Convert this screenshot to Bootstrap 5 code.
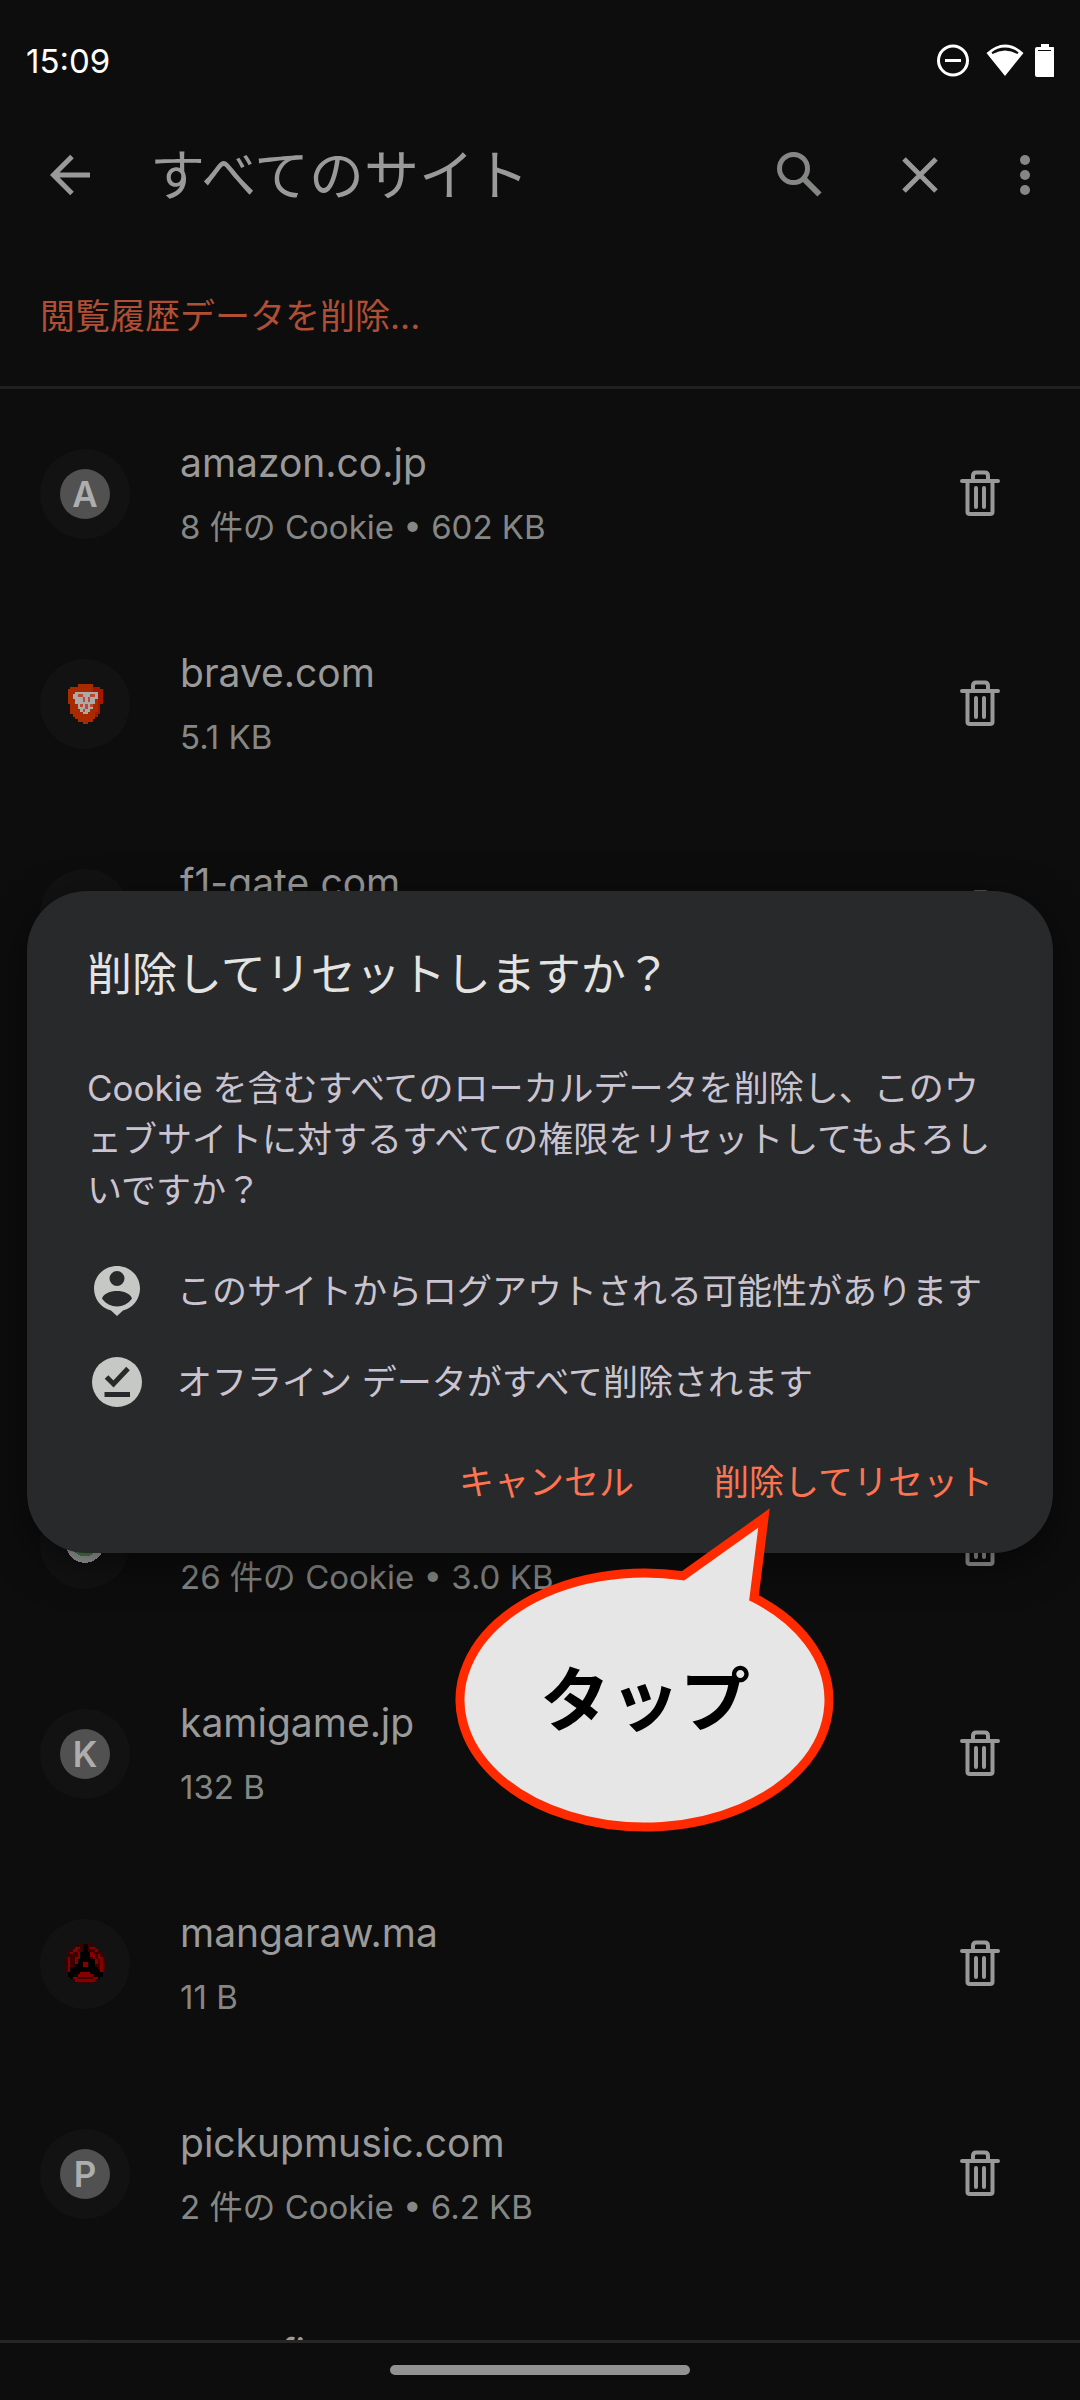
<!DOCTYPE html>
<html lang="ja">
<head>
<meta charset="utf-8">
<meta name="viewport" content="width=device-width, initial-scale=1">
<title>すべてのサイト</title>
<link href="https://cdn.jsdelivr.net/npm/bootstrap@5.3.0/dist/css/bootstrap.min.css" rel="stylesheet">
<style>
  body { background: #0d0d0d; color: #9a9a9a; font-family: Inter, "Noto Sans CJK JP", sans-serif; font-size: 35px; line-height: 50px; }
  svg { display: block; flex: none; }
  .btn { --bs-btn-padding-x: 0; --bs-btn-padding-y: 0; --bs-btn-border-width: 0; --bs-btn-font-size: 35px; --bs-btn-line-height: 50px; color: inherit; }
  .status-bar { height: 104px; padding: 18px 26px 0; color: #fff; font-size: 33px; }
  .app-bar { height: 142px; padding: 0 50px 0 46px; }
  .app-title { font-size: 55px; line-height: 80px; padding-left: 56px; }
  .app-tools { gap: 76px; }
  .clear-row { height: 143px; padding: 0 40px; border-bottom: 3px solid #202021; }
  .clear-link { color: #b04f36; }
  .site-row { height: 210px; padding: 0 76px 0 40px; gap: 50px; }
  .avatar { width: 90px; height: 90px; background: #121212; }
  .letter-disc { width: 50px; height: 50px; background: #515151; color: #aeaeae; font-weight: 600; font-size: 35px; line-height: 50px; }
  .site-label { padding-top: 6px; }
  .site-name { font-size: 39px; line-height: 60px; min-height: 60px; }
  .site-info { color: #858785; font-size: 33px; line-height: 68px; min-height: 68px; }
  .nav-area { height: 60px; padding-bottom: 3px; border-top: 3px solid #262626; }
  .home-pill { width: 300px; height: 10px; background: #929292; }
  .dialog-box { margin: 0 27px; padding: 52px 60px 46px; background: #28292b; border-radius: 60px; color: #cac4d0; box-shadow: 0 12px 40px rgba(0, 0, 0, .5); }
  .dialog-title { font-size: 45px; line-height: 64px; margin: 0 0 56px; color: #e3e3e1; }
  .dialog-text { margin: 0 -10px 50px 0; line-height: 51px; }
  .dialog-notes { gap: 41px; margin-bottom: 50px; }
  .dialog-notes li { gap: 35px; padding-left: 5px; margin-right: -20px; }
  .dialog-actions { gap: 80px; color: #ff7450; }
  .tap-bubble { left: 455px; top: 1500px; width: 380px; }
  .tap-label { left: 0; right: 0; top: 151px; font-size: 70px; line-height: 100px; font-weight: 700; color: #000; }
</style>
</head>
<body>
<svg width="0" height="0" class="position-absolute" aria-hidden="true">
  <symbol id="trash" viewBox="0 0 48 48"><g fill="none" stroke="#999" stroke-width="4" stroke-linecap="round" stroke-linejoin="round"><path d="M6 11H42M11.500 12V42Q11.500 44 14 44H34Q36.500 44 36.500 42V12M17 11V6Q17 2.500 20 2.500H29Q32 2.500 32 6V11M20 18V37M28 18V37"/></g></symbol>
</svg>
<div class="position-relative d-flex flex-column vh-100 overflow-hidden">
  <div class="status-bar d-flex align-items-center justify-content-between flex-shrink-0">
    <span>15:09</span>
    <svg width="118" height="36" viewBox="0 0 118 36" fill="#fff" aria-hidden="true">
      <circle cx="17" cy="17.500" r="14.500" fill="none" stroke="#fff" stroke-width="3"/><path d="M9 16h16v3H9z"/>
      <path d="M69 33 50.500 10Q69-7 87.500 10ZM69 4.500Q61 4.500 55.500 9.500L56.500 11Q69 4 81.500 11L82.500 9.500Q77 4.500 69 4.500Z" fill-rule="evenodd"/>
      <path d="M105 1h8v3h4a2 2 0 0 1 2 2v26a2 2 0 0 1-2 2h-16a2 2 0 0 1-2-2V6a2 2 0 0 1 2-2h4zM102 7v1h13V7z" fill-rule="evenodd"/>
    </svg>
  </div>
  <header class="app-bar d-flex align-items-center flex-shrink-0">
    <button class="btn" aria-label="戻る"><svg width="48" height="48" viewBox="0 0 48 48" fill="none" stroke="#999" stroke-width="5"><path d="M44 24H8M26 5.500 7.500 24 26 42.500"/></svg></button>
    <h1 class="app-title fw-normal mb-0 me-auto">すべてのサイト</h1>
    <div class="app-tools d-flex align-items-center">
      <button class="btn" aria-label="検索"><svg width="48" height="48" viewBox="-3 0 48 48" overflow="visible" fill="none" stroke="#858785" stroke-width="5"><circle cx="18.500" cy="17.500" r="14"/><path stroke-width="6" d="M29 28 44.500 43.500"/></svg></button>
      <button class="btn" aria-label="閉じる"><svg width="48" height="48" viewBox="0 0 48 48" fill="none" stroke="#999" stroke-width="5"><path d="M8 8 40 40M40 8 8 40"/></svg></button>
      <button class="btn" aria-label="その他"><svg width="10" height="48" viewBox="0 0 10 48" fill="#858785"><circle cx="5" cy="9" r="5"/><circle cx="5" cy="24" r="5"/><circle cx="5" cy="39" r="5"/></svg></button>
    </div>
  </header>
  <div class="clear-row d-flex align-items-center flex-shrink-0"><a class="clear-link text-decoration-none" href="#">閲覧履歴データを削除...</a></div>
  <main class="flex-grow-1 overflow-hidden">
    <ul class="list-unstyled mb-0">
      <li class="site-row d-flex align-items-center">
        <div class="avatar rounded-circle d-flex align-items-center justify-content-center"><span class="letter-disc rounded-circle text-center">A</span></div>
        <div class="site-label flex-grow-1"><div class="site-name">amazon.co.jp</div><div class="site-info">8 件の Cookie • 602 KB</div></div>
        <button class="btn" aria-label="削除"><svg width="48" height="48"><use href="#trash"/></svg></button>
      </li>
      <li class="site-row d-flex align-items-center">
        <div class="avatar rounded-circle d-flex align-items-center justify-content-center">
          <svg width="40" height="40" viewBox="0 0 16 16" shape-rendering="crispEdges" aria-hidden="true">
            <path fill="#a82b00" d="M5 0h6v1h3v1h1v6h-1v4h-1v1h-1v1h-1v1H9v1H7v-1H5v-1H4v-1H3v-1H2V8H1V2h1V1h3z"/>
            <path fill="#a81500" d="M11 1h3v1h1v6h-1v4h-1v1h-1v-2h1V5h-2z"/>
            <path fill="#aaa" d="M4 3h9v3h-1v2h-1v2h-1v1H9v1H7v-1H6v-1H5V8H4V6H3V4h1z"/>
            <path fill="#bd4a30" d="M5 4h2v1H5zM10 4h2v1h-2zM7 5h1v2H7zM9 5h1v2H9zM6 8h1v1H6zM10 8h1v1h-1zM8 8h1v2H8zM7 10h1v1H7z"/>
          </svg></div>
        <div class="site-label flex-grow-1"><div class="site-name">brave.com</div><div class="site-info">5.1 KB</div></div>
        <button class="btn" aria-label="削除"><svg width="48" height="48"><use href="#trash"/></svg></button>
      </li>
      <li class="site-row d-flex align-items-center">
        <div class="avatar rounded-circle"></div>
        <div class="site-label flex-grow-1"><div class="site-name">f1-gate.com</div><div class="site-info"></div></div>
        <button class="btn" aria-label="削除"><svg width="48" height="48"><use href="#trash"/></svg></button>
      </li>
      <li class="site-row"></li>
      <li class="site-row"></li>
      <li class="site-row d-flex align-items-center">
        <div class="avatar rounded-circle d-flex align-items-center justify-content-center">
          <svg width="40" height="40" viewBox="0 0 16 16" shape-rendering="crispEdges" aria-hidden="true"><circle cx="8" cy="8" r="7.500" fill="#a5a5a5"/><circle cx="8" cy="7.500" r="5.500" fill="#4c8a50"/></svg></div>
        <div class="site-label flex-grow-1"><div class="site-name"></div><div class="site-info">26 件の Cookie • 3.0 KB</div></div>
        <button class="btn" aria-label="削除"><svg width="48" height="48"><use href="#trash"/></svg></button>
      </li>
      <li class="site-row d-flex align-items-center">
        <div class="avatar rounded-circle d-flex align-items-center justify-content-center"><span class="letter-disc rounded-circle text-center">K</span></div>
        <div class="site-label flex-grow-1"><div class="site-name">kamigame.jp</div><div class="site-info">132 B</div></div>
        <button class="btn" aria-label="削除"><svg width="48" height="48"><use href="#trash"/></svg></button>
      </li>
      <li class="site-row d-flex align-items-center">
        <div class="avatar rounded-circle d-flex align-items-center justify-content-center">
          <svg width="40" height="40" viewBox="0 0 16 16" shape-rendering="crispEdges" aria-hidden="true">
            <path fill="#3d0000" d="M5 0h6v1h2v1h1v1h1v2h1v6h-1v2h-1v1h-1v1h-2v1H5v-1H3v-1H2v-1H1v-2H0V5h1V3h1V2h1V1h2z"/>
            <path fill="#000" d="M7 0h2v3h1v3h2v3h1v1h2v3h-1v1h-2v-1H4v1H2v-1H1v-3h1V9h2V6h1V5h1V3h1z"/>
            <path fill="#870000" d="M4 1h2v1H4zM3 2h2v1H3zM2 3h1v1H2zM1 5h1v6H1zM5 3h1v3H5zM4 5h1v3H4zM10 1h2v1h-2zM12 2h1v1h-1zM10 3h1v2h-1zM11 4h1v2h-1zM12 6h1v2h-1zM13 4h1v2h-1zM14 5h1v6h-1zM7 7h2v2H7zM6 11h4v1h1v1H5v-1h1zM3 13h2v1h6v-1h2v1h-1v1H4v-1H3z"/>
          </svg></div>
        <div class="site-label flex-grow-1"><div class="site-name">mangaraw.ma</div><div class="site-info">11 B</div></div>
        <button class="btn" aria-label="削除"><svg width="48" height="48"><use href="#trash"/></svg></button>
      </li>
      <li class="site-row d-flex align-items-center">
        <div class="avatar rounded-circle d-flex align-items-center justify-content-center"><span class="letter-disc rounded-circle text-center">P</span></div>
        <div class="site-label flex-grow-1"><div class="site-name">pickupmusic.com</div><div class="site-info">2 件の Cookie • 6.2 KB</div></div>
        <button class="btn" aria-label="削除"><svg width="48" height="48"><use href="#trash"/></svg></button>
      </li>
      <li class="site-row d-flex align-items-center">
        <div class="avatar rounded-circle"></div>
        <div class="site-label flex-grow-1"><div class="site-name">manafi.com</div><div class="site-info"></div></div>
      </li>
    </ul>
  </main>
  <footer class="nav-area flex-shrink-0 d-flex align-items-center justify-content-center"><div class="home-pill rounded-pill"></div></footer>

  <div class="position-absolute top-0 bottom-0 start-0 end-0 d-flex flex-column">
    <div class="status-bar flex-shrink-0"></div>
    <div class="flex-grow-1 d-flex flex-column justify-content-center">
      <section class="dialog-box" role="dialog" aria-labelledby="dlg-title">
        <h2 class="dialog-title fw-normal" id="dlg-title">削除してリセットしますか？</h2>
        <p class="dialog-text">Cookie を含むすべてのローカルデータを削除し、このウェブサイトに対するすべての権限をリセットしてもよろしいですか？</p>
        <ul class="dialog-notes list-unstyled d-flex flex-column">
          <li class="d-flex align-items-center">
            <svg width="50" height="50" viewBox="0 0 50 50" aria-hidden="true"><path fill="#c6c8c6" fill-rule="evenodd" d="M25 0C12 0 2 10 2 22.500C2 33 9 42 19 44.500L25 50L31 44.500C41 42 48 33 48 22.500C48 10 38 0 25 0ZM25 5a7.500 7.500 0 1 1 0 15a7.500 7.500 0 0 1 0-15ZM10 32.500C13 22.500 37 22.500 40 32.500C33 43 17 43 10 32.500Z"/></svg>
            <span>このサイトからログアウトされる可能性があります</span>
          </li>
          <li class="d-flex align-items-center">
            <svg width="50" height="50" viewBox="0 0 50 50" aria-hidden="true"><circle cx="25" cy="25" r="25" fill="#c6c8c6"/><path fill="none" stroke="#28292b" stroke-width="5" d="M12.500 37.500H38M14.500 20 21.500 27 36 11.500"/></svg>
            <span>オフライン データがすべて削除されます</span>
          </li>
        </ul>
        <div class="dialog-actions d-flex justify-content-end">
          <button class="btn">キャンセル</button>
          <button class="btn">削除してリセット</button>
        </div>
      </section>
    </div>
    <div class="nav-area flex-shrink-0 border-0"></div>
  </div>

  <div class="tap-bubble position-absolute">
    <svg width="380" height="340" viewBox="0 0 380 340" aria-hidden="true"><path d="M228 75.800A184.500 127 0 1 0 299 97.800L309 18Z" fill="#e6e6e6" stroke="#ff2a00" stroke-width="9" stroke-miterlimit="10"/></svg>
    <div class="tap-label position-absolute text-center">タップ</div>
  </div>
</div>
<script src="https://cdn.jsdelivr.net/npm/bootstrap@5.3.0/dist/js/bootstrap.bundle.min.js"></script>
</body>
</html>
